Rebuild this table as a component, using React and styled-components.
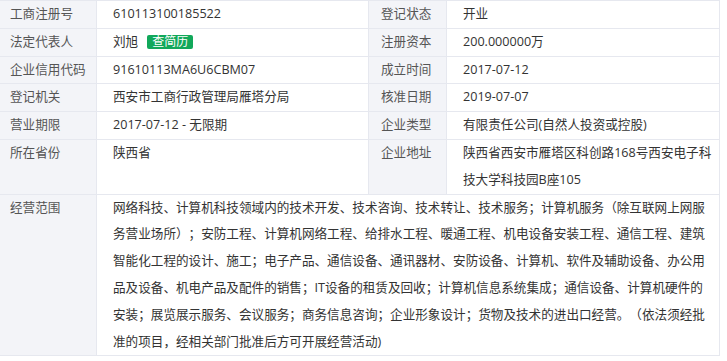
import React from 'react'
import styled, { createGlobalStyle } from 'styled-components'

const GlobalStyle = createGlobalStyle`
body {
    margin: 0;
    background: #fff;
    font-family: "Open Sans", "Noto Sans CJK SC", sans-serif;
}
`

const rows = [
    [['工商注册号', '610113100185522'], ['登记状态', '开业']],
    [['法定代表人', '刘旭', true], ['注册资本', '200.000000万']],
    [['企业信用代码', '91610113MA6U6CBM07'], ['成立时间', '2017-07-12']],
    [['登记机关', '西安市工商行政管理局雁塔分局'], ['核准日期', '2019-07-07']],
    [['营业期限', '2017-07-12 - 无限期'], ['企业类型', '有限责任公司(自然人投资或控股)']],
    [['所在省份', '陕西省'], ['企业地址', '陕西省西安市雁塔区科创路168号西安电子科技大学科技园B座105']],
]

const scope = '网络科技、计算机科技领域内的技术开发、技术咨询、技术转让、技术服务；计算机服务（除互联网上网服务营业场所）；安防工程、计算机网络工程、给排水工程、暖通工程、机电设备安装工程、通信工程、建筑智能化工程的设计、施工；电子产品、通信设备、通讯器材、安防设备、计算机、软件及辅助设备、办公用品及设备、机电产品及配件的销售；IT设备的租赁及回收；计算机信息系统集成；通信设备、计算机硬件的安装；展览展示服务、会议服务；商务信息咨询；企业形象设计；货物及技术的进出口经营。（依法须经批准的项目，经相关部门批准后方可开展经营活动)'

const InfoTable = () => {
    return (
        <Table>
            {rows.map((row, i) => (
                <React.Fragment key={i}>
                    <Label $pad={10}>{row[0][0]}</Label>
                    <Value>
                        {row[0][1]}
                        {row[0][2] && <Badge>查简历</Badge>}
                    </Value>
                    <Label $pad={12}>{row[1][0]}</Label>
                    <Value>{row[1][1]}</Value>
                </React.Fragment>
            ))}
            <Label $pad={10}>经营范围</Label>
            <Value $span={3}>{scope}</Value>
        </Table>
    )
}

const Table = styled.div`
width: 720px;
box-sizing: border-box;
display: grid;
grid-template-columns: 96px 271px 77px 272px;
gap: 1px;
padding: 1px 1px 1px 0;
background: #e6e8ef;
font-size: 12.6px;
line-height: 26.8px;
`

const Label = styled.div`
background: #f3f4f8;
color: #555;
padding-left: ${p => p.$pad}px;
white-space: nowrap;
`

const Value = styled.div`
background: #fff;
color: #333;
padding: 0 4px 0 16px;
grid-column: span ${p => p.$span || 1};
text-spacing-trim: space-all;
word-break: break-all;
`

const Badge = styled.span`
display: inline-block;
margin-left: 9px;
padding: 0 5px;
background: #11a85a;
color: #fff;
font-size: 12px;
line-height: 14px;
border-radius: 2px;
vertical-align: 0px;
`

const App = () => {
    return (
        <>
            <GlobalStyle />
            <InfoTable />
        </>
    )
}

export default App
